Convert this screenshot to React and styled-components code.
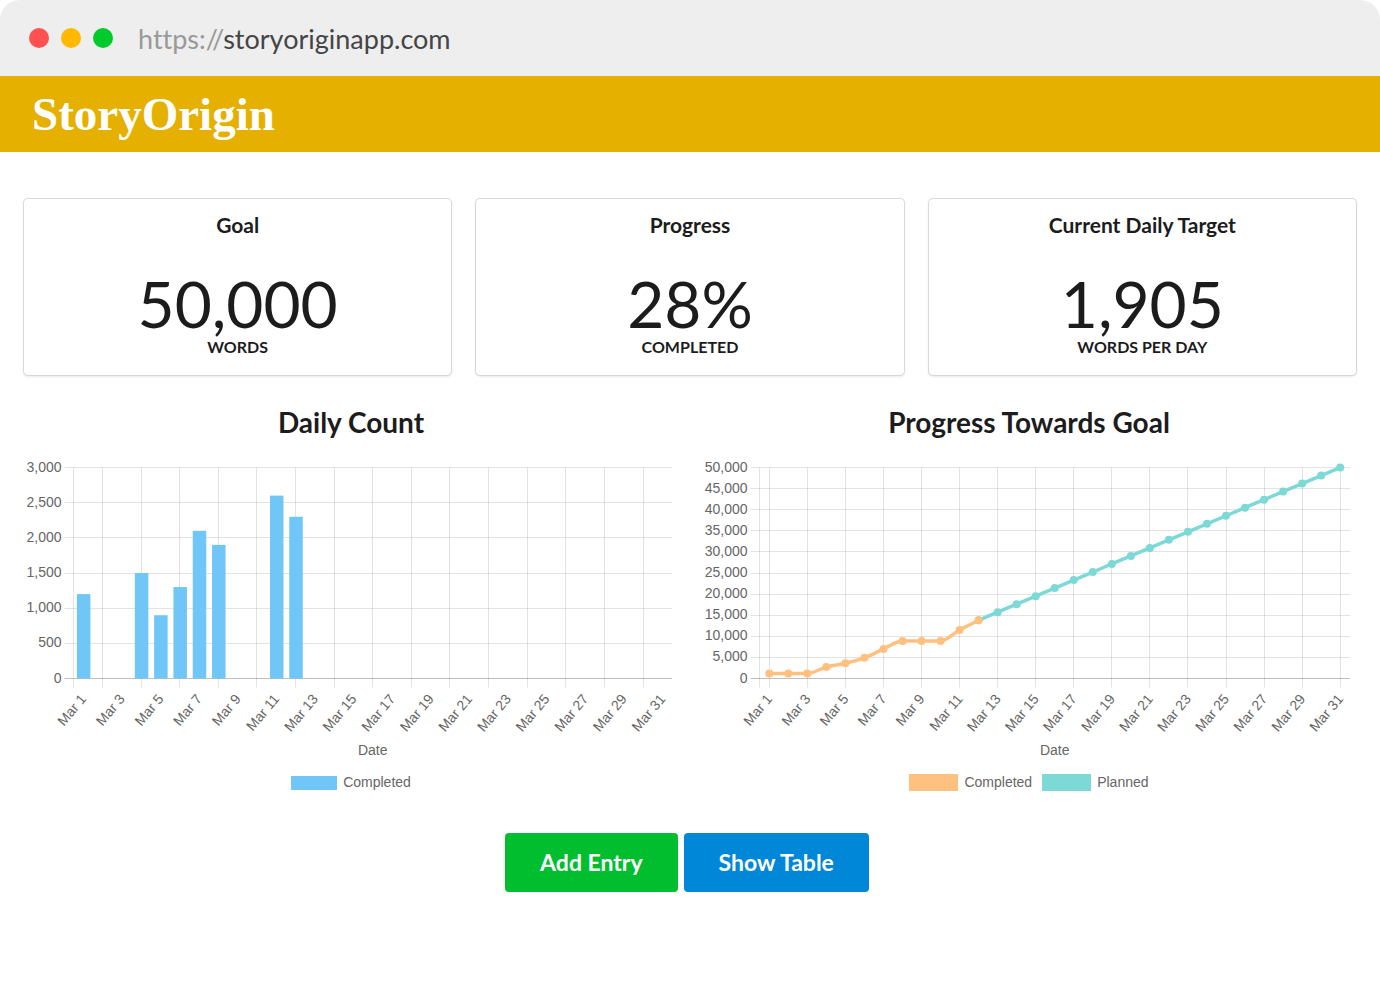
import styled, { createGlobalStyle } from "styled-components";

const color = {
	text: "#1c1c1d",
	axis: "#666",
	blue: "#70c6f6",
	orange: "#ffc080",
	teal: "#7cd9d6",
};

const GlobalStyle = createGlobalStyle`
	* {
		box-sizing: border-box;
		margin: 0;
		padding: 0;
	}

	body {
		background-color: #fff;
		color: ${color.text};
		font-family: Lato, sans-serif;
	}
`;

const BrowserBar = styled.div`
	display: flex;
	align-items: center;
	height: 76px;
	padding: 0 29px;
	border-radius: 20px 20px 0 0;
	background-color: #eee;
`;

const Lights = styled.div`
	display: flex;
	gap: 12px;
	margin-right: 25px;
`;

const Light = styled.span`
	width: 20px;
	height: 20px;
	border-radius: 50%;
	background-color: ${(props) => props.$color};
`;

const Address = styled.p`
	padding-top: 2px;
	font-size: 27px;
	font-variant-ligatures: none;
	line-height: 32px;
	color: #444547;

	span {
		color: #999;
	}
`;

const Header = styled.header`
	display: flex;
	align-items: center;
	height: 76px;
	padding: 0 32px;
	background-color: #e5b000;
`;

const Logo = styled.a`
	font-family: "Liberation Serif", serif;
	font-size: 47px;
	font-weight: 700;
	line-height: 52px;
	color: #fff;
	text-decoration: none;
`;

const Cards = styled.section`
	display: grid;
	grid-template-columns: repeat(3, 1fr);
	gap: 25px;
	padding: 47px 24px 0;

	@media (max-width: 700px) {
		grid-template-columns: initial;
	}
`;

const Card = styled.div`
	padding: 11px 16px 18px;
	border-radius: 4px;
	box-shadow: 0 1px 3px 0 #d4d4d5, 0 0 0 1px #dcdcdd;
	text-align: center;

	h2 {
		font-size: 21px;
		line-height: 30px;
	}

	strong {
		display: block;
		margin-top: 32px;
		font-size: 64px;
		font-weight: 400;
		line-height: 64px;
	}

	p {
		margin-top: 1px;
		font-size: 16px;
		font-weight: 700;
		line-height: 20px;
		text-transform: uppercase;
	}
`;

const Charts = styled.section`
	display: grid;
	grid-template-columns: repeat(2, 1fr);
	gap: 24px;
	padding: 29px 24px 0;

	h2 {
		font-size: 28px;
		line-height: 36px;
		text-align: center;
	}

	@media (max-width: 900px) {
		grid-template-columns: initial;
	}
`;

const Plot = styled.svg`
	display: block;
	width: 100%;
	height: auto;
	margin-top: 17px;
	font-family: "Liberation Sans", sans-serif;
	font-size: 14px;
	fill: ${color.axis};
`;

const Legend = styled.ul`
	display: flex;
	justify-content: center;
	gap: 10px;
	margin-top: 14px;
	list-style: none;
	font-family: "Liberation Sans", sans-serif;
	font-size: 14px;
	line-height: 17px;
	color: ${color.axis};

	li {
		display: flex;
		align-items: center;
		gap: 6px;
	}
`;

const Swatch = styled.span`
	width: ${(props) => (props.$small ? 46 : 49)}px;
	height: ${(props) => (props.$small ? 14 : 17)}px;
	background-color: ${(props) => props.$color};
`;

const Actions = styled.div`
	display: flex;
	justify-content: center;
	gap: 6px;
	padding: 42px 30px 60px 24px;
`;

const Button = styled.button`
	padding: 0 35px;
	border: 0;
	border-radius: 4px;
	background-color: ${(props) => props.$color};
	color: #fff;
	font-family: inherit;
	font-size: 23px;
	font-weight: 700;
	line-height: 59px;
	cursor: pointer;
`;

const stats = [
	{ title: "Goal", value: "50,000", unit: "Words" },
	{ title: "Progress", value: "28%", unit: "Completed" },
	{ title: "Current Daily Target", value: "1,905", unit: "Words per day" },
];

const GOAL = 50000;
const DAYS = 31;
const daily = [1200, 0, 0, 1500, 900, 1300, 2100, 1900, 0, 0, 2600, 2300];

const completed = daily.map((_, i) =>
	daily.slice(0, i + 1).reduce((sum, n) => sum + n, 0)
);
const written = completed[completed.length - 1];
const daysLeft = DAYS - completed.length;
const planned = Array.from(
	{ length: daysLeft + 1 },
	(_, i) => written + ((GOAL - written) / daysLeft) * i
);

const oddDays = Array.from({ length: 16 }, (_, i) => i * 2 + 1);

// plot area inside the 654 x 303 canvas
const TOP = 10.5;
const BOTTOM = 221.5;
const RIGHT = 648;

const scaleY = (value, max) => BOTTOM - (value / max) * (BOTTOM - TOP);

// smooth line which never overshoots its points
const linePath = (points) => {
	const slopes = points
		.slice(1)
		.map(([x, y], i) => (y - points[i][1]) / (x - points[i][0]));
	const tangents = points.map((_, i) => {
		const a = slopes[i - 1] ?? slopes[i];
		const b = slopes[i] ?? slopes[i - 1];
		return a * b <= 0 ? 0 : (2 * a * b) / (a + b);
	});

	return points.reduce((path, [x, y], i) => {
		if (i === 0) return `M${x} ${y}`;
		const [px, py] = points[i - 1];
		const third = (x - px) / 3;
		return `${path} C${px + third} ${py + tangents[i - 1] * third} ${
			x - third
		} ${y - tangents[i] * third} ${x} ${y}`;
	}, "");
};

const Axes = ({ left, max, step, lines, dayX }) => {
	const ticks = Array.from({ length: max / step + 1 }, (_, i) => i * step);

	return (
		<>
			<g stroke="#000" strokeOpacity="0.11">
				{ticks.map((tick) => {
					const y = Math.floor(scaleY(tick, max)) + 0.5;
					return (
						<line
							key={tick}
							x1={left - 9}
							x2={RIGHT}
							y1={y}
							y2={y}
							strokeOpacity={tick === 0 ? 0.25 : 0.11}
						/>
					);
				})}
				<line x1={left} x2={left} y1={TOP} y2={BOTTOM + 9} />
				{lines.map((x) => (
					<line
						key={x}
						x1={Math.floor(x) + 0.5}
						x2={Math.floor(x) + 0.5}
						y1={TOP}
						y2={BOTTOM + 9}
					/>
				))}
			</g>
			{ticks.map((tick) => (
				<text
					key={tick}
					x={left - 12}
					y={scaleY(tick, max) + 4}
					textAnchor="end"
				>
					{tick.toLocaleString("en-US")}
				</text>
			))}
			{oddDays.map((day) => (
				<text
					key={day}
					textAnchor="end"
					transform={`translate(${dayX(day)} 239) rotate(-50)`}
					dy="5"
				>
					Mar {day}
				</text>
			))}
			<text x={(left + RIGHT) / 2} y="298" textAnchor="middle">
				Date
			</text>
		</>
	);
};

const DailyCount = () => {
	const left = 49.5;
	const step = (RIGHT - left) / DAYS;
	const dayX = (day) => left + step * (day - 0.5);

	return (
		<Plot viewBox="0 0 654 303" role="img" aria-label="Daily Count">
			<Axes
				left={left}
				max={3000}
				step={500}
				lines={oddDays.slice(0, 15).map((day) => dayX(day + 1))}
				dayX={dayX}
			/>
			<g fill={color.blue}>
				{daily.map((count, i) => (
					<rect
						key={i}
						x={dayX(i + 1) - 6.25}
						y={scaleY(count, 3000)}
						width="13.5"
						height={BOTTOM - scaleY(count, 3000)}
					/>
				))}
			</g>
		</Plot>
	);
};

const Series = ({ points, stroke }) => (
	<g fill={stroke}>
		<path
			d={linePath(points)}
			fill="none"
			stroke={stroke}
			strokeWidth="3.5"
		/>
		{points.map(([x, y]) => (
			<circle key={x} cx={x} cy={y} r="4" />
		))}
	</g>
);

const GoalProgress = () => {
	const left = 57.5;
	const dayX = (day) => 67.3 + 19.03 * (day - 1);
	const toPoints = (values, firstDay) =>
		values.map((value, i) => [dayX(firstDay + i), scaleY(value, GOAL)]);

	return (
		<Plot viewBox="0 0 654 303" role="img" aria-label="Progress Towards Goal">
			<Axes
				left={left}
				max={GOAL}
				step={5000}
				lines={oddDays.map(dayX)}
				dayX={dayX}
			/>
			<Series
				points={toPoints(planned, completed.length)}
				stroke={color.teal}
			/>
			<Series points={toPoints(completed, 1)} stroke={color.orange} />
		</Plot>
	);
};

const App = () => {
	return (
		<>
			<GlobalStyle />
			<BrowserBar>
				<Lights>
					<Light $color="#ff5052" />
					<Light $color="#ffb900" />
					<Light $color="#00ca2c" />
				</Lights>
				<Address>
					<span>https://</span>storyoriginapp.com
				</Address>
			</BrowserBar>
			<Header>
				<Logo href="#">StoryOrigin</Logo>
			</Header>

			<main>
				<Cards>
					{stats.map((stat) => (
						<Card key={stat.title}>
							<h2>{stat.title}</h2>
							<strong>{stat.value}</strong>
							<p>{stat.unit}</p>
						</Card>
					))}
				</Cards>

				<Charts>
					<div>
						<h2>Daily Count</h2>
						<DailyCount />
						<Legend>
							<li>
								<Swatch $color={color.blue} $small />
								Completed
							</li>
						</Legend>
					</div>
					<div>
						<h2>Progress Towards Goal</h2>
						<GoalProgress />
						<Legend>
							<li>
								<Swatch $color={color.orange} />
								Completed
							</li>
							<li>
								<Swatch $color={color.teal} />
								Planned
							</li>
						</Legend>
					</div>
				</Charts>

				<Actions>
					<Button type="button" $color="#00be2e">
						Add Entry
					</Button>
					<Button type="button" $color="#0087d8">
						Show Table
					</Button>
				</Actions>
			</main>
		</>
	);
};

export default App;
